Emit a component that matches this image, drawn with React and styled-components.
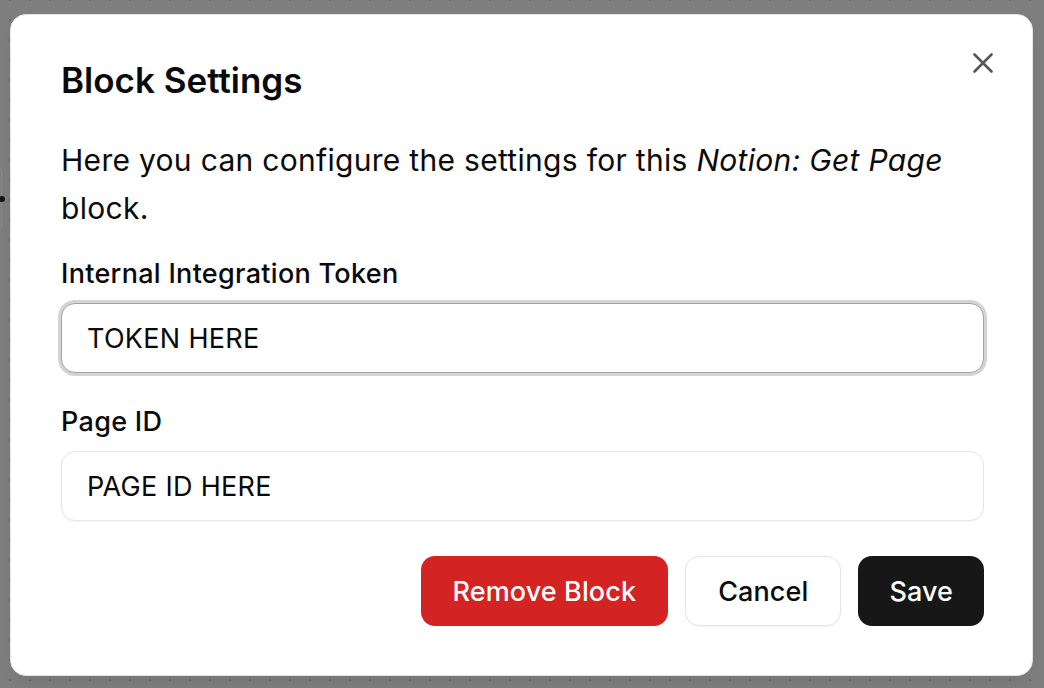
import React from "react";
import styled, { createGlobalStyle } from "styled-components";

const GlobalStyle = createGlobalStyle`
  html, body {
    margin: 0;
    padding: 0;
  }
  body {
    font-family: Inter, "Noto Sans", "Liberation Sans", sans-serif;
    color: #0a0a0a;
    background: #7f7f7f;
  }
`;

const Canvas = styled.div`
  position: relative;
  width: 1044px;
  height: 688px;
  overflow: hidden;
  background-color: #7f7f7f;
  background-image: radial-gradient(circle, #6c6c6c 1px, transparent 1.4px);
  background-size: 20px 20px;
  background-position: 0 -10px;
  padding: 14px 11px 0 10px;
  box-sizing: border-box;
`;

const Node = styled.div`
  position: absolute;
  left: -200px;
  top: 164px;
  width: 202px;
  height: 70px;
  border-radius: 8px;
  border: 1px solid #8b8b8b;
  background: #808080;
  box-sizing: border-box;
`;

const Handle = styled.span`
  position: absolute;
  right: -4px;
  top: 31px;
  width: 6px;
  height: 6px;
  border-radius: 50%;
  background: #141414;
`;

const Dialog = styled.div`
  position: relative;
  box-sizing: border-box;
  width: 1023px;
  height: 662px;
  background: #ffffff;
  border: 1px solid #e5e5e5;
  border-radius: 16px;
  box-shadow: 0 8px 20px rgba(0, 0, 0, 0.08);
  padding: 45px 48px 48px 50px;
  display: flex;
  flex-direction: column;
`;

const CloseButton = styled.button`
  position: absolute;
  top: 37px;
  right: 38px;
  width: 22px;
  height: 22px;
  padding: 0;
  border: none;
  background: transparent;
  display: flex;
  align-items: center;
  justify-content: center;
  cursor: pointer;
`;

const Title = styled.h2`
  margin: 0;
  font-size: 35px;
  line-height: 40px;
  font-weight: 600;
  letter-spacing: 0;
`;

const Description = styled.p`
  margin: 36px 0 0;
  font-size: 30px;
  line-height: 48px;
  font-weight: 400;
  color: #0a0a0a;
  letter-spacing: 0.3px;
  em {
    font-style: italic;
  }
`;

const Field = styled.div`
  display: flex;
  flex-direction: column;
  margin-top: ${(p) => p.$top}px;
`;

const Label = styled.label`
  font-size: 27px;
  line-height: 30px;
  font-weight: 500;
  letter-spacing: 0.3px;
`;

const Input = styled.input`
  box-sizing: border-box;
  margin-top: 14px;
  width: 923px;
  height: 70px;
  padding: 0 25px;
  border-radius: 14px;
  border: 1px solid ${(p) => (p.$focused ? "#a3a3a3" : "#e5e5e5")};
  box-shadow: ${(p) =>
    p.$focused
      ? "0 0 0 3px #d4d4d4"
      : "0 1px 2px rgba(0, 0, 0, 0.04)"};
  font-family: inherit;
  font-size: 27px;
  color: #0a0a0a;
  background: #fff;
  outline: none;
  letter-spacing: 0.3px;
`;

const Footer = styled.div`
  display: flex;
  justify-content: flex-end;
  gap: 17px;
  margin-top: 35px;
`;

const Button = styled.button`
  box-sizing: border-box;
  height: 70px;
  padding: 0 ${(p) => p.$px}px;
  border-radius: 14px;
  font-family: inherit;
  font-size: 27px;
  font-weight: 500;
  letter-spacing: 0.1px;
  cursor: pointer;
  border: 1px solid
    ${(p) => (p.$variant === "outline" ? "#e5e5e5" : "transparent")};
  background: ${(p) =>
    p.$variant === "danger"
      ? "#d42323"
      : p.$variant === "primary"
      ? "#171717"
      : "#ffffff"};
  color: ${(p) => (p.$variant === "outline" ? "#0a0a0a" : "#ffffff")};
  box-shadow: ${(p) =>
    p.$variant === "outline" ? "0 1px 2px rgba(0,0,0,0.05)" : "none"};
`;

export default function App() {
  return (
    <>
      <GlobalStyle />
      <Canvas>
        <Node>
          <Handle />
        </Node>
        <Dialog>
          <CloseButton aria-label="Close">
            <svg width="20" height="20" viewBox="0 0 20 20">
              <path
                d="M1.5 1.5 L18.5 18.5 M18.5 1.5 L1.5 18.5"
                stroke="#575757"
                strokeWidth="2.6"
                strokeLinecap="round"
              />
            </svg>
          </CloseButton>
          <Title>Block Settings</Title>
          <Description>
            Here you can configure the settings for this{" "}
            <em>Notion: Get Page</em> block.
          </Description>
          <Field $top={27}>
            <Label>Internal Integration Token</Label>
            <Input $focused defaultValue="TOKEN HERE" />
          </Field>
          <Field $top={34}>
            <Label>Page ID</Label>
            <Input defaultValue="PAGE ID HERE" />
          </Field>
          <Footer>
            <Button $variant="danger" $px={31}>
              Remove Block
            </Button>
            <Button $variant="outline" $px={32}>
              Cancel
            </Button>
            <Button $variant="primary" $px={30}>
              Save
            </Button>
          </Footer>
        </Dialog>
      </Canvas>
    </>
  );
}
